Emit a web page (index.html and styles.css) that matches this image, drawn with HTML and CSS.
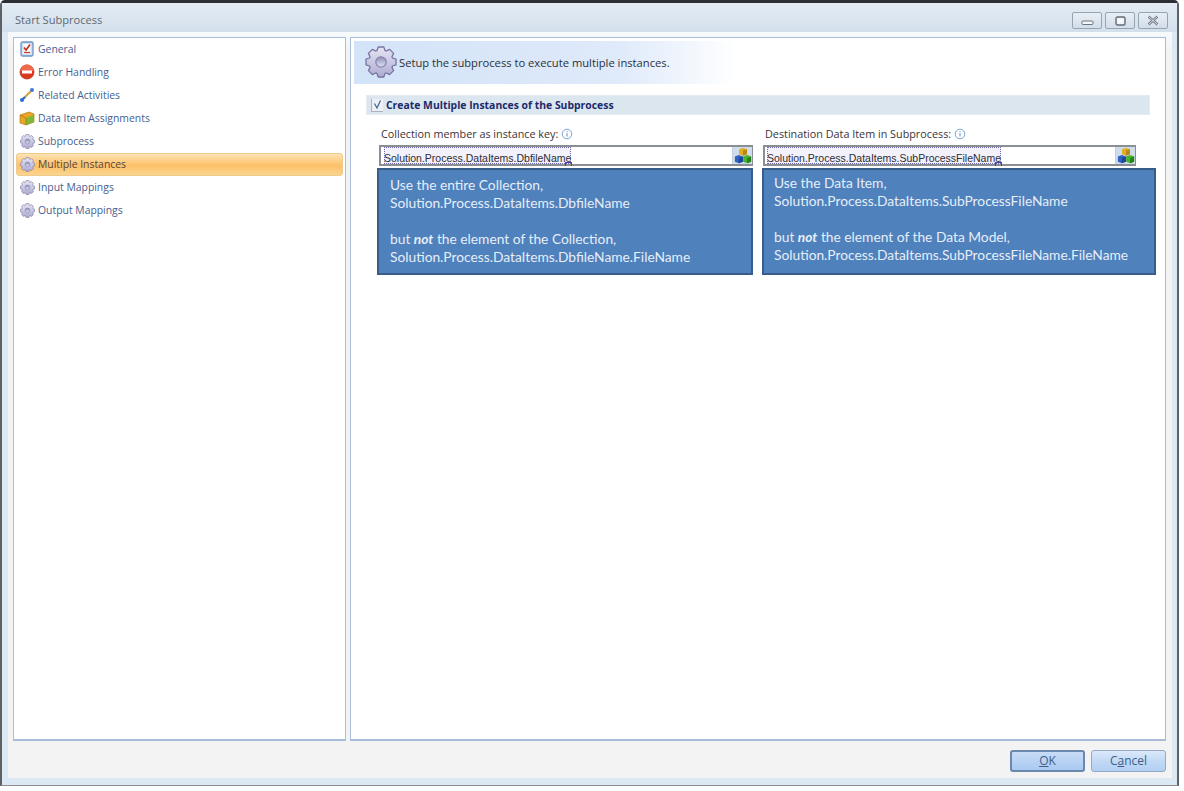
FILE: index.html
```html
<!DOCTYPE html>
<html lang="en">
<head>
<meta charset="utf-8">
<title>Start Subprocess</title>
<link rel="stylesheet" href="styles.css">
</head>
<body>
<svg class="defs" width="0" height="0" aria-hidden="true">
  <defs>
    <linearGradient id="gearFill" x1="0" y1="0" x2="0" y2="1">
      <stop offset="0" stop-color="#e6e5f3"/>
      <stop offset="1" stop-color="#aeabd2"/>
    </linearGradient>
    <linearGradient id="holeFill" x1="0" y1="0" x2="0" y2="1">
      <stop offset="0" stop-color="#8f8cb8"/>
      <stop offset="1" stop-color="#dfe6f5"/>
    </linearGradient>
    <symbol id="gear" viewBox="-16 -16 32 32">
      <polygon fill="url(#gearFill)" stroke="#77749f" stroke-width="1.300" stroke-linejoin="round" points="-4,-11.5 -2.8,-15 2.8,-15 4,-11.5 5.3,-10.96 8.63,-12.59 12.59,-8.63 10.96,-5.3 11.5,-4 15,-2.8 15,2.8 11.5,4 10.96,5.3 12.59,8.63 8.63,12.59 5.3,10.96 4,11.5 2.8,15 -2.8,15 -4,11.5 -5.3,10.96 -8.63,12.59 -12.59,8.63 -10.96,5.3 -11.5,4 -15,2.8 -15,-2.8 -11.5,-4 -10.96,-5.3 -12.59,-8.63 -8.63,-12.59 -5.3,-10.96"/>
      <circle r="5.200" fill="url(#holeFill)" stroke="#8581ad" stroke-width="1.200"/>
    </symbol>
    <symbol id="cubes" viewBox="0 0 16 16">
      <path d="M4.500 2 8 .8 11.500 2v4.500L8 7.700 4.500 6.500z" fill="#e3ad1f"/>
      <path d="M8 3.200 11.500 2v4.500L8 7.700z" fill="#b9861a"/>
      <path d="M.8 8.500 4.300 7.200 7.900 8.500V13L4.300 14.500.8 13z" fill="#2f62c4"/>
      <path d="M4.300 9.800 7.900 8.500V13L4.300 14.500z" fill="#1f4596"/>
      <path d="M8.100 8.500 11.700 7.200l3.500 1.300V13l-3.500 1.500L8.100 13z" fill="#45b52f"/>
      <path d="M11.700 9.800l3.500-1.300V13l-3.500 1.500z" fill="#27801c"/>
    </symbol>
    <symbol id="info" viewBox="0 0 12 12">
      <circle cx="6" cy="6" r="4.800" fill="#fff" stroke="#7ba3d4" stroke-width="1"/>
      <path d="M6 3.200v1M6 5.200v3.300" stroke="#6f97c9" stroke-width="1.100" fill="none"/>
    </symbol>
  </defs>
</svg>
<div class="window">
  <header class="titlebar">
    <span class="title">Start Subprocess</span>
    <div class="controls">
      <button class="ctl" type="button" aria-label="Minimize"><svg width="13" height="10" viewBox="0 0 13 10"><rect x="1" y="5" width="11" height="3.500" rx="1" fill="#f4f7fa" stroke="#6b7480"/></svg></button>
      <button class="ctl ctl-max" type="button" aria-label="Maximize"><svg width="11" height="10" viewBox="0 0 11 10"><rect x="1" y="1" width="9" height="8" rx="1.500" fill="#eef2f6" stroke="#626b76" stroke-width="1.400"/><rect x="3.500" y="3.500" width="4" height="3" fill="#fff"/></svg></button>
      <button class="ctl ctl-close" type="button" aria-label="Close"><svg width="14" height="11" viewBox="0 0 14 11"><path d="M2.500 1.500l9 8M11.500 1.500l-9 8" stroke="#6b7480" stroke-width="2.400" fill="none"/><path d="M2.500 1.500l9 8M11.500 1.500l-9 8" stroke="#eef2f6" stroke-width=".9" fill="none"/></svg></button>
    </div>
  </header>
  <div class="client">
    <div class="panels">
      <nav class="nav">
        <a class="nav-item"><svg class="nav-icon" viewBox="0 0 16 16"><rect x="2" y="1" width="12" height="14" rx="1.500" fill="#cfe0f4" stroke="#6d93c4" stroke-width="1.300"/><rect x="4.500" y="3" width="7" height="10" fill="#fff"/><path d="M5 6.500l2 2.500L11 3.500" stroke="#c8361f" stroke-width="1.700" fill="none"/><path d="M5 11.500h6" stroke="#c8361f" stroke-width="1.300"/></svg><span>General</span></a>
        <a class="nav-item"><svg class="nav-icon" viewBox="0 0 16 16"><circle cx="8" cy="8" r="7" fill="#dc3a1e" stroke="#b92c14" stroke-width=".8"/><path d="M1.500 7a6.500 6.500 0 0 1 13 0z" fill="#ee6a4b"/><rect x="3" y="6.500" width="10" height="3" fill="#fff"/></svg><span>Error Handling</span></a>
        <a class="nav-item"><svg class="nav-icon" viewBox="0 0 16 16"><path d="M3 13 13 3" stroke="#d6a23e" stroke-width="2.200"/><path d="M3 13l3-3" stroke="#2f6fd0" stroke-width="2.200"/><circle cx="3" cy="13" r="2" fill="#2a6cd2"/><circle cx="13" cy="3" r="2" fill="#3a7ad8"/></svg><span>Related Activities</span></a>
        <a class="nav-item"><svg class="nav-icon" viewBox="0 0 16 16"><path d="M1 5l9-3 5 2v8l-8 3-6-2z" fill="#e9a526" stroke="#b67a14" stroke-width=".7"/><path d="M7 8l8-3v7l-8 3z" fill="#7cb83a"/><path d="M1 5l6 3v7" fill="none" stroke="#a9700f" stroke-width=".7"/></svg><span>Data Item Assignments</span></a>
        <a class="nav-item"><svg class="nav-icon gear-sm"><use href="#gear"/></svg><span>Subprocess</span></a>
        <a class="nav-item is-active"><svg class="nav-icon gear-sm"><use href="#gear"/></svg><span>Multiple Instances</span></a>
        <a class="nav-item"><svg class="nav-icon gear-sm"><use href="#gear"/></svg><span>Input Mappings</span></a>
        <a class="nav-item"><svg class="nav-icon gear-sm"><use href="#gear"/></svg><span>Output Mappings</span></a>
      </nav>
      <main class="content">
        <div class="banner">
          <svg class="gear-lg"><use href="#gear"/></svg>
          <span>Setup the subprocess to execute multiple instances.</span>
        </div>
        <div class="section">
          <span class="check"><svg width="11" height="11" viewBox="0 0 11 11"><path d="M2.500 4.500 5 9 8.500 1.500" stroke="#3f5f96" stroke-width="1.200" fill="none"/></svg></span>
          <span class="section-title">Create Multiple Instances of the Subprocess</span>
        </div>
        <div class="columns">
          <div class="col col-left">
            <label class="field-label label-left">Collection member as instance key: <svg class="info"><use href="#info"/></svg></label>
            <div class="input input-left">
              <span class="value"><span class="token">Solution.Process.DataItems.DbfileName</span></span>
              <span class="picker"><svg width="18" height="18"><use href="#cubes"/></svg></span>
            </div>
            <div class="callout callout-left">
              <p>Use the entire Collection,<br>Solution.Process.DataItems.DbfileName</p>
              <p>but <b><i>not</i></b> the element of the Collection,<br>Solution.Process.DataItems.DbfileName.FileName</p>
            </div>
          </div>
          <div class="col col-right">
            <label class="field-label label-right">Destination Data Item in Subprocess: <svg class="info"><use href="#info"/></svg></label>
            <div class="input input-right">
              <span class="value"><span class="token">Solution.Process.DataItems.SubProcessFileName</span></span>
              <span class="picker"><svg width="18" height="18"><use href="#cubes"/></svg></span>
            </div>
            <div class="callout callout-right">
              <p>Use the Data Item,<br>Solution.Process.DataItems.SubProcessFileName</p>
              <p>but <b><i>not</i></b> the element of the Data Model,<br>Solution.Process.DataItems.SubProcessFileName.FileName</p>
            </div>
          </div>
        </div>
      </main>
    </div>
    <footer class="footer">
      <button class="btn btn-default" type="button"><u>O</u>K</button>
      <button class="btn" type="button">C<u>a</u>ncel</button>
    </footer>
  </div>
</div>
</body>
</html>
```

FILE: styles.css
```css
* { box-sizing: border-box; }
html, body { margin: 0; padding: 0; background: #fff; }
body { font-family: "Open Sans", "Liberation Sans", sans-serif; overflow: hidden; }
.defs { position: absolute; }

.window {
  width: 1179px;
  height: 786px;
  display: flex;
  flex-direction: column;
  background: #dce8f3;
  border-top: 3px solid #2c3034;
  border-left: 2px solid #5d6165;
  border-right: 2px solid #5d6165;
  border-bottom: 1px solid #8a8d90;
  border-radius: 5px 5px 0 0;
}

.titlebar {
  height: 29px;
  flex: none;
  display: flex;
  align-items: flex-start;
  justify-content: space-between;
  padding: 9px 9px 0 13px;
  background: linear-gradient(#e3ebf3, #d3e0ec);
}
.title { font-size: 11.100px; line-height: 16px; color: #5f6871; }
.controls { display: flex; gap: 3px; }
.ctl {
  width: 30px;
  height: 17px;
  padding: 0;
  display: flex;
  align-items: center;
  justify-content: center;
  border: 1px solid #98a4b1;
  border-radius: 2px;
  background: linear-gradient(#e8eef4, #d3dee9);
}

.client {
  flex: 1;
  min-height: 0;
  margin: 0 5px 7px 6px;
  padding: 5px 6px 0 5px;
  display: flex;
  flex-direction: column;
  background: linear-gradient(#f6fafe, #f3f3f3 20px);
}
.panels { flex: 1; min-height: 0; display: flex; gap: 4px; }

.nav {
  width: 333px;
  flex: none;
  padding: 0 2px;
  background: #fff;
  border: 1px solid #a9bcd8;
  border-bottom-width: 2px;
  display: flex;
  flex-direction: column;
}
.nav-item {
  height: 23px;
  flex: none;
  display: flex;
  align-items: center;
  gap: 3px;
  padding-left: 3px;
  padding-bottom: 1px;
  font-size: 10.400px;
  color: #46608f;
  white-space: nowrap;
}
.nav-icon { width: 16px; height: 16px; flex: none; }
.gear-sm { width: 15px; height: 15px; margin-left: 1px; }
.is-active {
  color: #5a4438;
  border-radius: 3px;
  background: linear-gradient(#fde3b4, #fdc16a 55%, #fad48f);
  border: 1px solid #f0c98c;
  padding-left: 2px;
}

.content {
  flex: 1;
  min-width: 0;
  padding: 3px;
  background: #fff;
  border: 1px solid #a9bcd8;
  border-bottom-width: 2px;
}
.banner {
  width: 381px;
  height: 43px;
  display: flex;
  align-items: center;
  gap: 2px;
  padding-left: 11px;
  font-size: 11.200px;
  color: #2b3138;
  background: linear-gradient(90deg, #d3e3f8, #dfeafa 70%, #fff);
}
.gear-lg { width: 32px; height: 32px; flex: none; margin-top: -2px; }

.section {
  width: 784px;
  height: 20px;
  margin: 11px 0 12px 12px;
  display: flex;
  align-items: center;
  gap: 3px;
  padding-left: 4px;
  background: #dce6ee;
  border: 1px solid #e4ebf1;
}
.check {
  width: 12px;
  height: 13px;
  display: flex;
  align-items: center;
  justify-content: center;
  background: #edf1f5;
  border-left: 1px solid #a8b3c0;
  border-bottom: 1px solid #a8b3c0;
}
.section-title { font-size: 10.400px; font-weight: 700; color: #1b2a6b; white-space: nowrap; }

.columns { display: flex; gap: 9px; margin-left: 23px; }
.col { display: flex; flex-direction: column; }
.col-left { width: 376px; }
.col-right { width: 394px; }

.field-label {
  height: 13px;
  margin-bottom: 5px;
  display: flex;
  align-items: center;
  gap: 0;
  font-size: 10.800px;
  line-height: 13px;
  color: #3a3438;
  white-space: pre;
}
.label-left { margin-left: 4px; }
.label-right { margin-left: 3px; }
.info { width: 12px; height: 12px; flex: none; }

.input {
  height: 21px;
  margin-left: 2px;
  display: flex;
  background: #fff;
  border: 2px solid #8a8f95;
  border-right-width: 1px;
}
.input-left { width: 374px; }
.input-right { width: 373px; margin-left: 1px; }
.value { flex: 1; min-width: 0; display: flex; padding: 0 0 0 3px; }
.input-right .value { padding-left: 2px; }
.token {
  position: relative;
  display: block;
  height: 17px;
  padding-top: 4px;
  font-family: "Liberation Sans", Arial, sans-serif;
  font-size: 10.500px;
  line-height: 14px;
  color: #2d2d33;
  white-space: nowrap;
  background: #f3f1fb;
  outline: 1px dotted #6f66b0;
  outline-offset: -1px;
}
.token::after {
  content: "";
  position: absolute;
  right: -1px;
  bottom: -2px;
  width: 5px;
  height: 3px;
  border: 1px solid #4a3fb0;
  border-bottom: 0;
}
.picker {
  width: 20px;
  flex: none;
  display: flex;
  align-items: center;
  justify-content: center;
  background: #cfdcea;
  border-left: 1px solid #c2cfdd;
}

.callout {
  height: 107px;
  margin-top: 2px;
  background: #4f81bd;
  border: 2px solid #385d8a;
  font-family: Lato, "Open Sans", sans-serif;
  font-size: 13.780px;
  line-height: 18px;
  color: #e6eef8;
  white-space: nowrap;
}
.callout p { margin: 0 0 18px; }
.callout-left { padding: 6px 0 0 11px; }
.callout-right { padding: 4px 0 0 10px; }

.footer {
  height: 37px;
  flex: none;
  display: flex;
  justify-content: flex-end;
  align-items: flex-start;
  gap: 6px;
  padding-top: 9px;
}
.btn {
  width: 75px;
  height: 22px;
  padding: 0;
  font-family: "Open Sans", "Liberation Sans", sans-serif;
  font-size: 12px;
  line-height: 18px;
  color: #3f5f88;
  border: 1px solid #93a9c4;
  border-radius: 3px;
  background: linear-gradient(#dbe9fa, #c2d9f5 50%, #b2cff2);
}
.btn-default {
  border: 2px solid #6b88ad;
  background: linear-gradient(#c8dcf6, #a9c9f2);
}
```
